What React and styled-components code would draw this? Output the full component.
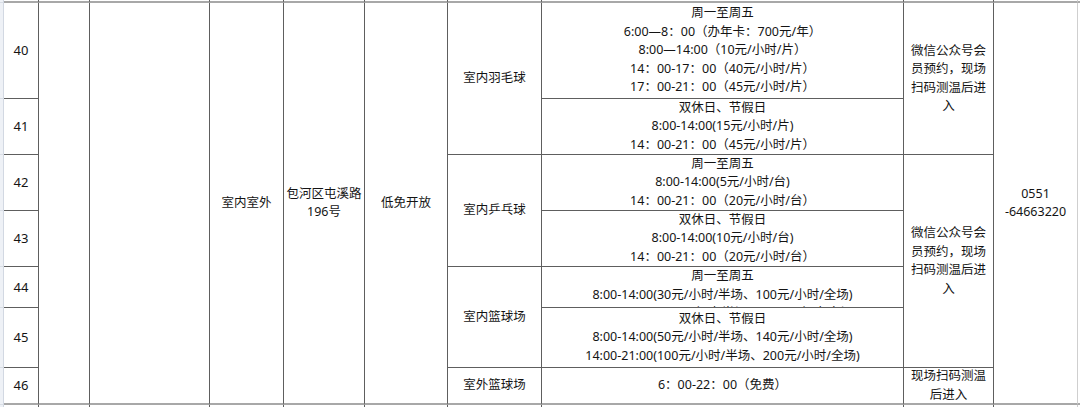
import React from "react";
import styled, { createGlobalStyle } from "styled-components";

const Global = createGlobalStyle`
  html, body { margin: 0; padding: 0; background: #ffffff; }
  body { font-family: "Noto Sans", "Noto Sans CJK SC", sans-serif; }
`;

const DARK = "#5e5e5e";
const THICK = "#a8a8a8";

const Sheet = styled.div`
  display: grid;
  grid-template-columns: 4px 35px 51px 120px 74px 81px 83px 94px 362px 90px 84px 2px;
  grid-template-rows: 3px 96px 56px 56px 56px 41px 60px 37px 4px;
  width: 1080px;
  height: 407px;
  overflow: hidden;
  background: #ffffff;
  color: #141414;
  font-family: "Noto Sans", "Noto Sans CJK SC", sans-serif;
`;

const Strip = styled.div`
  grid-column: 1;
  grid-row: ${(p) => p.$row};
  box-sizing: border-box;
  background: #eef1f6;
  border-right: 1px solid #d2d8e2;
  border-bottom: ${(p) => (p.$end ? "none" : "1px solid #d9dee6")};
`;

const Edge = styled.div`
  grid-column: ${(p) => p.$col};
  grid-row: ${(p) => p.$row};
  box-sizing: border-box;
  border-right: ${(p) => (p.$right === "none" ? "none" : `1px solid ${p.$right === "light" ? "#cfcfcf" : DARK}`)};
  border-bottom: ${(p) => (p.$top ? `2px solid ${THICK}` : "none")};
`;

const Cell = styled.div`
  grid-column: ${(p) => p.$col};
  grid-row: ${(p) => p.$row};
  box-sizing: border-box;
  min-width: 0;
  border-right: ${(p) => (p.$right === "none" ? "none" : `1px solid ${p.$right === "light" ? "#cfcfcf" : DARK}`)};
  border-bottom: ${(p) => (p.$last ? `2px solid ${THICK}` : `1px solid ${DARK}`)};
  display: flex;
  flex-direction: column;
  align-items: center;
  justify-content: ${(p) => (p.$top ? "flex-start" : "center")};
  text-align: center;
  overflow: hidden;
  padding: 0 ${(p) => (p.$pad ? p.$pad : 2)}px;
  font-size: 12.5px;
  line-height: 18.5px;
`;

const NumCell = styled(Cell)`
  font-size: 13px;
  padding: 0;
`;

const Line = styled.div`
  white-space: nowrap;
`;

const ClipLine = styled.div`
  white-space: nowrap;
  height: 3px;
  overflow: hidden;
`;

const Wrap = styled.div`
  width: 100%;
  word-break: break-all;
`;

const schedules = [
  { lines: ["周一至周五", "6:00—8：00（办年卡：700元/年）", "8:00—14:00（10元/小时/片）", "14：00-17：00（40元/小时/片）", "17：00-21：00（45元/小时/片）"] },
  { lines: ["双休日、节假日", "8:00-14:00(15元/小时/片)", "14：00-21：00（45元/小时/片）"] },
  { lines: ["周一至周五", "8:00-14:00(5元/小时/台)", "14：00-21：00（20元/小时/台）"] },
  { lines: ["双休日、节假日", "8:00-14:00(10元/小时/台)", "14：00-21：00（20元/小时/台）"] },
  { lines: ["周一至周五", "8:00-14:00(30元/小时/半场、100元/小时/全场)"], clipped: "14:00-21:00(80元/小时/半场、160元/小时/全场)", top: true },
  { lines: ["双休日、节假日", "8:00-14:00(50元/小时/半场、140元/小时/全场)", "14:00-21:00(100元/小时/半场、200元/小时/全场)"] },
  { lines: ["6：00-22：00（免费）"] },
];

const nums = [40, 41, 42, 43, 44, 45, 46];

export default function App() {
  const edgeCols = [2, 3, 4, 5, 6, 7, 8, 9, 10, 11, 12];
  const rightOf = (c) => (c === 12 ? "none" : c === 11 ? "light" : "dark");
  return (
    <>
      <Global />
      <Sheet>
        {[1, 2, 3, 4, 5, 6, 7, 8, 9].map((r) => (
          <Strip key={"s" + r} $row={r} $end={r === 9} />
        ))}
        {edgeCols.map((c) => (
          <Edge key={"t" + c} $col={c} $row={1} $top $right={rightOf(c)} />
        ))}
        {edgeCols.map((c) => (
          <Edge key={"b" + c} $col={c} $row={9} $right={rightOf(c)} />
        ))}

        {nums.map((n, i) => (
          <NumCell key={n} $col={2} $row={i + 2} $last={i === 6}>
            {n}
          </NumCell>
        ))}

        <Cell $col={3} $row="2 / 9" $last />
        <Cell $col={4} $row="2 / 9" $last />
        <Cell $col={5} $row="2 / 9" $last>
          <Line>室内室外</Line>
        </Cell>
        <Cell $col={6} $row="2 / 9" $last>
          <Line>包河区屯溪路</Line>
          <Line>196号</Line>
        </Cell>
        <Cell $col={7} $row="2 / 9" $last>
          <Line>低免开放</Line>
        </Cell>

        <Cell $col={8} $row="2 / 4">
          <Line>室内羽毛球</Line>
        </Cell>
        <Cell $col={8} $row="4 / 6">
          <Line>室内乒乓球</Line>
        </Cell>
        <Cell $col={8} $row="6 / 8">
          <Line>室内篮球场</Line>
        </Cell>
        <Cell $col={8} $row="8 / 9" $last>
          <Line>室外篮球场</Line>
        </Cell>

        {schedules.map((s, i) => (
          <Cell key={"h" + i} $col={9} $row={i + 2} $last={i === 6} $top={s.top}>
            {s.lines.map((l, j) => (
              <Line key={j}>{l}</Line>
            ))}
            {s.clipped && <ClipLine>{s.clipped}</ClipLine>}
          </Cell>
        ))}

        <Cell $col={10} $row="2 / 4" $pad={4}>
          <Wrap>微信公众号会员预约，现场扫码测温后进入</Wrap>
        </Cell>
        <Cell $col={10} $row="4 / 8" $pad={4}>
          <Wrap>微信公众号会员预约，现场扫码测温后进入</Wrap>
        </Cell>
        <Cell $col={10} $row="8 / 9" $pad={4} $last>
          <Wrap>现场扫码测温后进入</Wrap>
        </Cell>

        <Cell $col={11} $row="2 / 9" $right="light" $last>
          <Line>0551</Line>
          <Line>-64663220</Line>
        </Cell>
        <Cell $col={12} $row="2 / 9" $right="none" $last />
      </Sheet>
    </>
  );
}
